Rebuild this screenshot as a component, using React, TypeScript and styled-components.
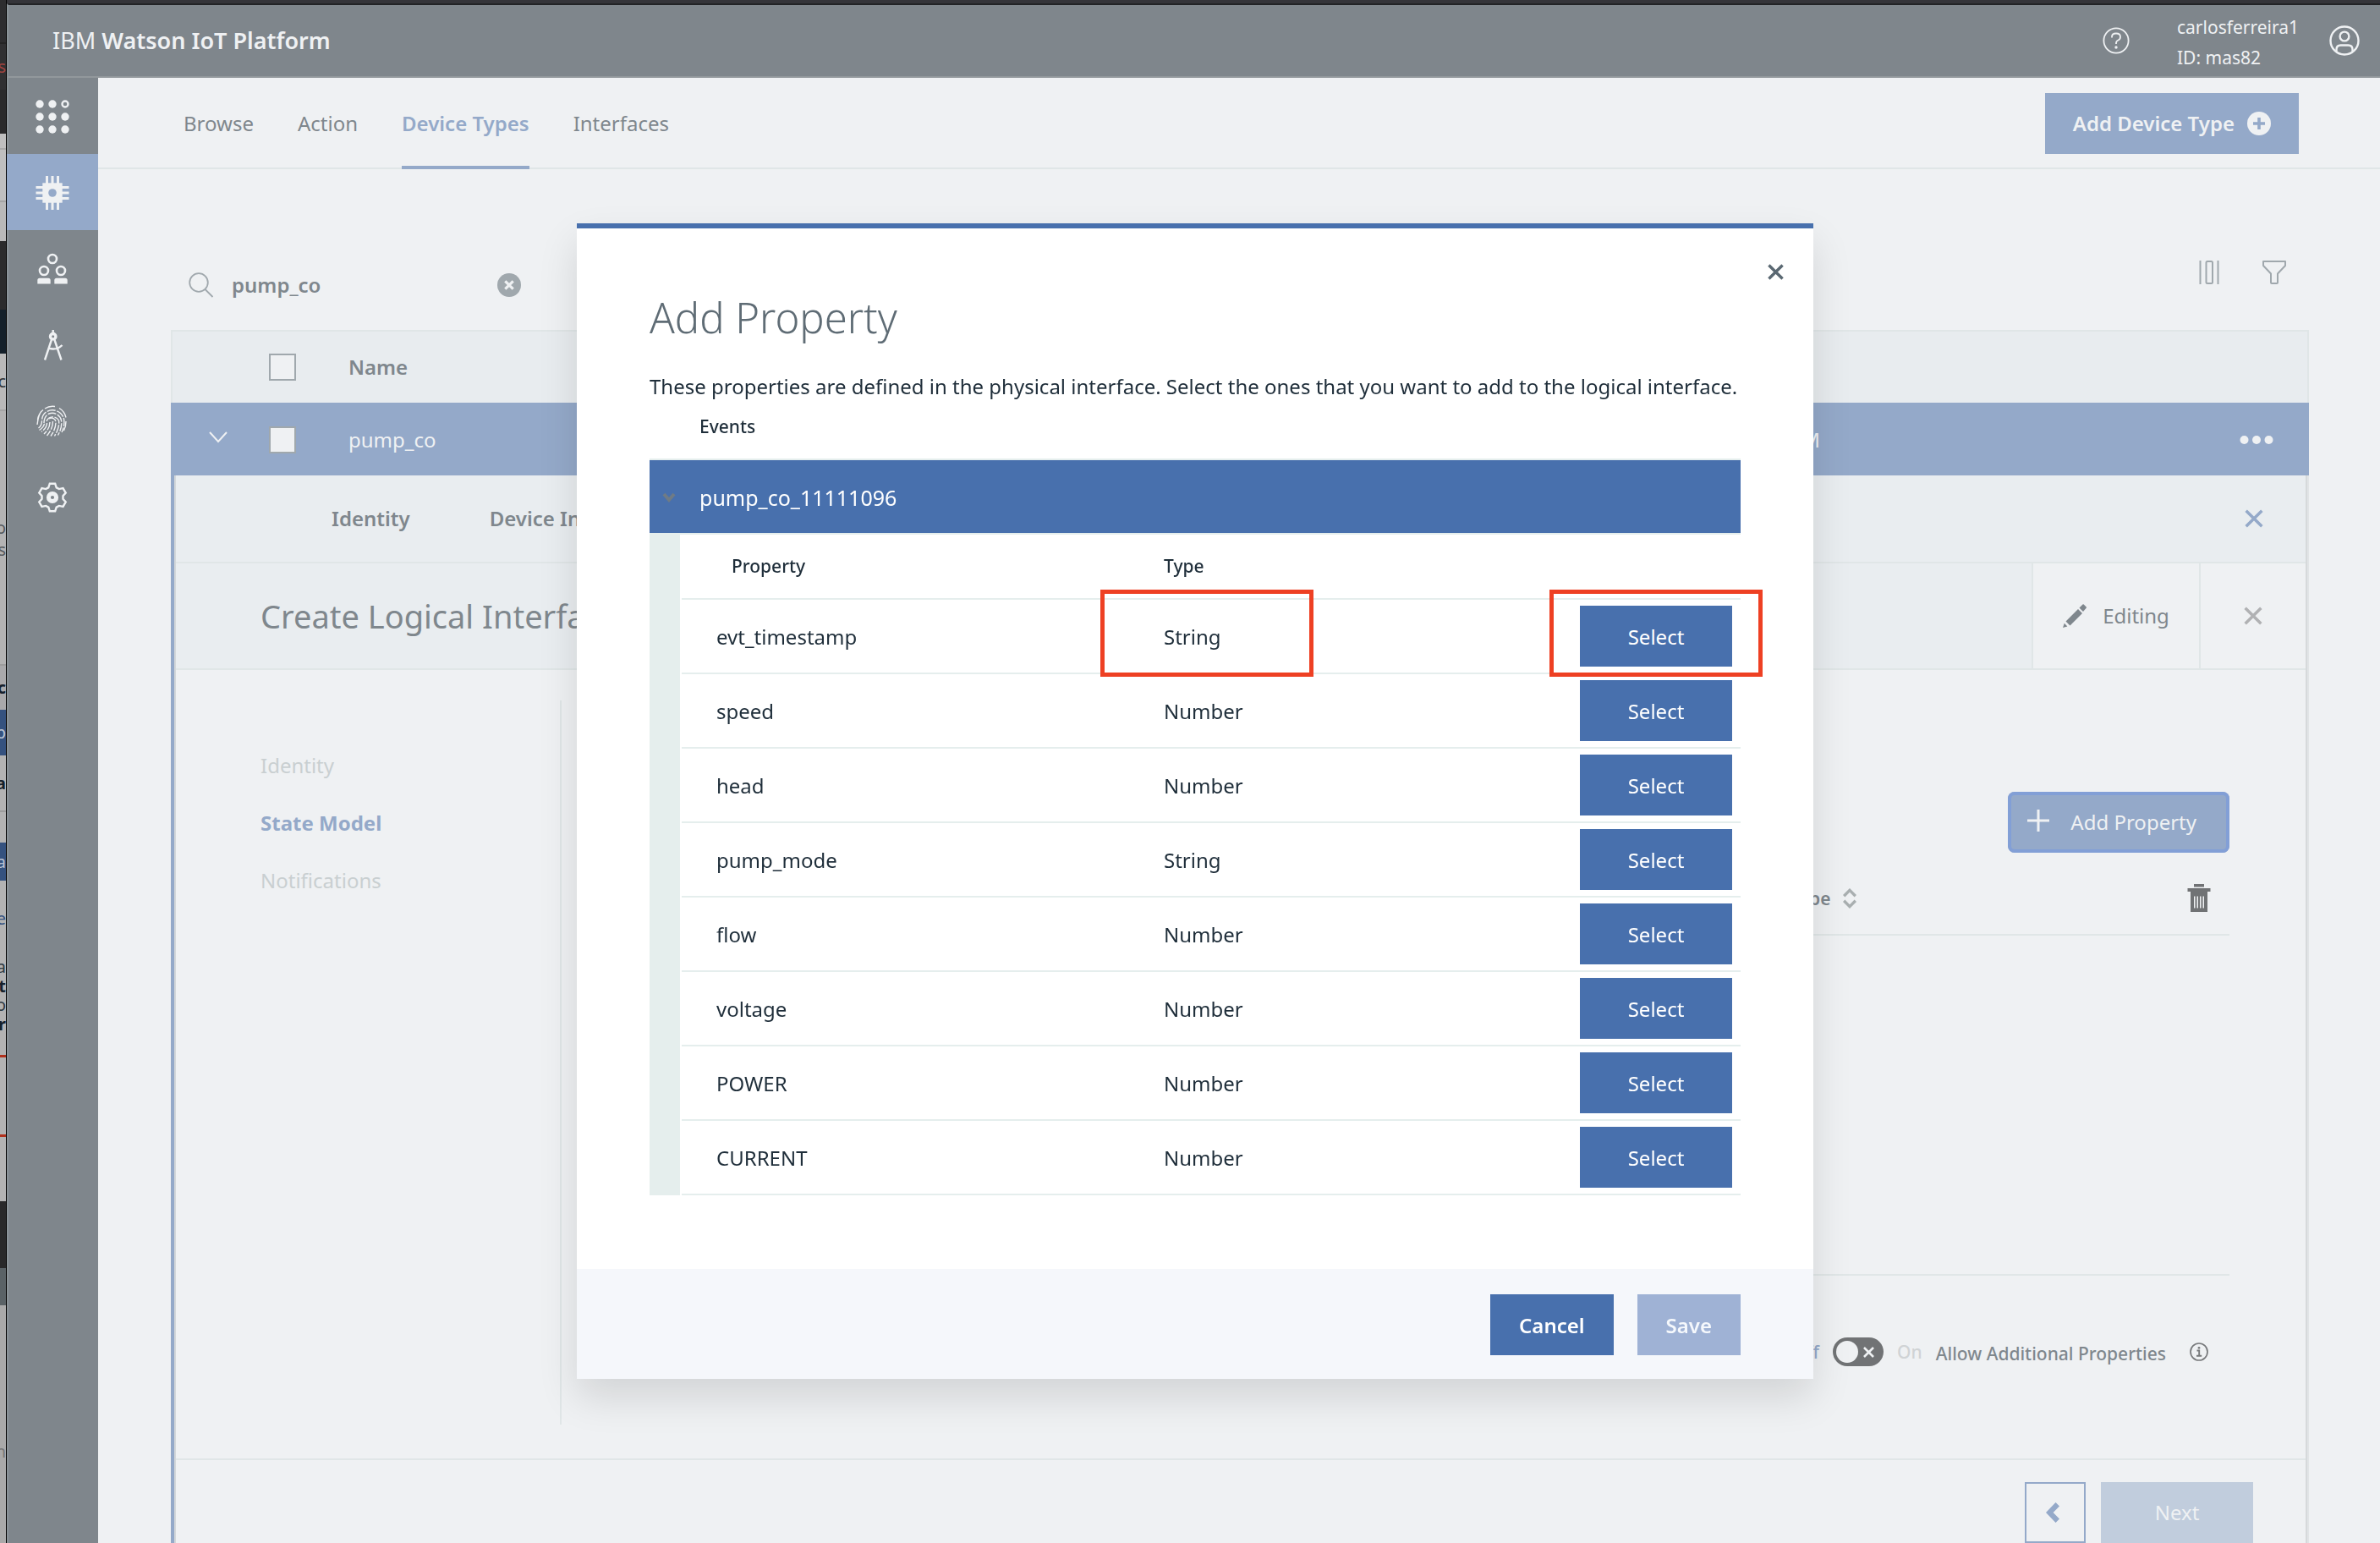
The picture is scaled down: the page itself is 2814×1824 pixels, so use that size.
import React from "react";
import styled, { createGlobalStyle, css } from "styled-components";

/* ---------- tokens ---------- */

const c = {
  page: "#eff1f3",
  chrome: "#7f868c",
  chromeEdge: "#8b9499",
  onChrome: "#eff1f3",
  fadedBlue: "#94a9c9",
  fadedText: "#7f878d",
  fadedIcon: "#a0a8ad",
  panel: "#e9edf0",
  line: "#e0e6e7",
  muted: "#c9cfd1",
  blue: "#4870ad",
  text: "#1f2e3a",
  pale: "#e5eeed",
  mark: "#ee4023",
};

const GlobalStyle = createGlobalStyle`
  *, *::before, *::after { box-sizing: border-box; }
  body { margin: 0; background: ${c.page}; }
  body, button, input, table {
    font-family: "Noto Sans", "Liberation Sans", sans-serif;
    font-size: 24px;
    line-height: 36px;
  }
  button { border: 0; padding: 0; background: none; color: inherit; cursor: pointer; }
  a { color: inherit; text-decoration: none; }
  svg { display: block; flex: none; }
`;

/* ---------- page frame ---------- */

const Page = styled.div`
  display: flex;
  min-height: 100vh;
`;

const Behind = styled.div`
  flex: none;
  width: 8px;
  border-right: 1px solid #000;
  background: #a9a9a9;
  overflow: hidden;
`;

const Slice = styled.div<{ $h: number; $bg: string; $ink?: string; $bold?: boolean }>`
  display: flex;
  align-items: center;
  justify-content: flex-end;
  height: ${(p) => p.$h}px;
  background: ${(p) => p.$bg};
  color: ${(p) => p.$ink};
  font-size: 20px;
  font-weight: ${(p) => (p.$bold ? 700 : 400)};
  line-height: 20px;
  overflow: hidden;
`;

const Window = styled.div`
  flex: 1;
  min-width: 0;
  display: flex;
  flex-direction: column;
  border-top: 4px solid #35353a;
`;

const Header = styled.header`
  display: flex;
  align-items: center;
  height: 88px;
  padding: 0 24px 0 52px;
  border-top: 2px solid #222326;
  border-bottom: 2px solid #92989c;
  border-left: 2px solid ${c.chromeEdge};
  background: ${c.chrome};
  color: ${c.onChrome};
`;

const Brand = styled.h1`
  flex: 1;
  margin: 0;
  font-size: 27px;
  font-weight: 600;
  span { font-weight: 400; }
`;

const UserInfo = styled.div`
  margin: 0 36px 0 56px;
  padding-top: 4px;
  font-size: 21px;
`;

const Columns = styled.div`
  flex: 1;
  display: flex;
`;

const Sidebar = styled.nav`
  flex: none;
  width: 108px;
  background: ${c.chrome};
  box-shadow: inset 2px 0 ${c.chromeEdge};
`;

const SideLink = styled.a<{ $active?: boolean }>`
  display: flex;
  align-items: center;
  justify-content: center;
  height: 90px;
  padding-top: 2px;
  color: ${c.onChrome};
  background: ${(p) => (p.$active ? c.fadedBlue : "transparent")};
`;

const Content = styled.div`
  flex: 1;
  min-width: 0;
  display: flex;
  flex-direction: column;
`;

const TabBar = styled.div`
  display: flex;
  align-items: center;
  height: 108px;
  padding: 0 96px 0 101px;
  box-shadow: inset 0 -2px ${c.line};
`;

const Tabs = styled.nav`
  flex: 1;
  display: flex;
  gap: 52px;
`;

const Tab = styled.a<{ $active?: boolean }>`
  display: flex;
  align-items: center;
  height: 108px;
  color: ${c.fadedText};
  ${(p) => p.$active && css`
    color: ${c.fadedBlue};
    font-weight: 600;
    box-shadow: inset 0 -4px ${c.fadedBlue};
  `}
`;

const AddDeviceButton = styled.button`
  display: flex;
  align-items: center;
  gap: 15px;
  height: 72px;
  padding: 0 33px;
  background: ${c.fadedBlue};
  color: ${c.onChrome};
  font-weight: 600;
`;

const Main = styled.main`
  flex: 1;
  display: flex;
  flex-direction: column;
  padding: 86px 84px 0 86px;
`;

/* ---------- device list ---------- */

const Toolbar = styled.div`
  display: flex;
  justify-content: space-between;
  height: 104px;
`;

const Search = styled.label`
  align-self: flex-end;
  display: flex;
  align-items: center;
  gap: 21px;
  width: 438px;
  height: 72px;
  margin-bottom: 17px;
  padding: 0 26px 0 21px;
  color: ${c.fadedIcon};
`;

const SearchInput = styled.input`
  flex: 1;
  min-width: 0;
  border: 0;
  padding: 0;
  outline: 0;
  background: none;
  color: ${c.fadedText};
  font-weight: 600;
`;

const ToolIcons = styled.div`
  display: flex;
  align-items: center;
  gap: 50px;
  height: 72px;
  padding-right: 27px;
  color: ${c.fadedIcon};
`;

const DeviceTable = styled.table`
  width: 100%;
  table-layout: fixed;
  border-collapse: separate;
  border-spacing: 0;
  text-align: left;
  th, td { height: 86px; padding: 0; }
  th {
    border-top: 2px solid ${c.line};
    background: #e8ecef;
    color: ${c.fadedText};
    font-weight: 600;
  }
  th:first-child { border-left: 2px solid ${c.line}; }
  th:last-child { border-right: 2px solid ${c.line}; }
  td { padding-top: 2px; background: ${c.fadedBlue}; color: ${c.onChrome}; }
`;

const Col = styled.col<{ $w?: number }>`
  width: ${(p) => (p.$w ? `${p.$w}px` : "auto")};
`;

const Checkbox = styled.input`
  appearance: none;
  display: block;
  width: 32px;
  height: 32px;
  margin: 0;
  border: 2px solid ${c.fadedIcon};
  background: ${c.page};
`;

const ExpandButton = styled.button`
  display: block;
  margin: 0 0 6px 45px;
`;

const EndCell = styled.td`
  text-align: right;
`;

const MoreButton = styled.button`
  display: block;
  margin: 0 42px 0 auto;
`;

/* ---------- expanded panel ---------- */

const Panel = styled.section`
  flex: 1;
  display: flex;
  flex-direction: column;
  border-left: 4px solid ${c.fadedBlue};
  border-right: 2px solid #e1e4e6;
  box-shadow: inset 2px 0 #d3d7da, inset -2px 0 #d6d9db;
  padding: 0 2px;
`;

const PanelTabs = styled.div`
  display: flex;
  align-items: center;
  height: 104px;
  padding: 0 49px 0 184px;
  border-bottom: 2px solid ${c.line};
  background: ${c.panel};
  color: ${c.fadedText};
  font-weight: 600;
`;

const PanelTab = styled.a`
  margin-right: 94px;
`;

const IconButton = styled.button<{ $ink?: string }>`
  display: flex;
  align-items: center;
  justify-content: center;
  width: 24px;
  height: 24px;
  color: ${(p) => p.$ink};
`;

const Spacer = styled.span`
  flex: 1;
`;

const TitleRow = styled.div`
  display: flex;
  align-items: stretch;
  height: 126px;
  border-bottom: 2px solid ${c.line};
  background: ${c.panel};
  color: ${c.fadedText};
`;

const PanelTitle = styled.h2`
  flex: 1;
  margin: 0;
  padding-left: 100px;
  font-size: 38px;
  font-weight: 400;
  line-height: 124px;
`;

const TitleCell = styled.div<{ $w: number }>`
  display: flex;
  align-items: center;
  justify-content: center;
  gap: 19px;
  width: ${(p) => p.$w}px;
  border-left: 2px solid ${c.line};
  background: ${c.page};
`;

const Wizard = styled.div`
  flex: 1;
  display: flex;
  padding: 36px 90px 40px 100px;
`;

const Steps = styled.nav`
  width: 356px;
  padding-top: 43px;
  border-right: 2px solid ${c.line};
`;

const Step = styled.a<{ $active?: boolean }>`
  display: block;
  line-height: 68px;
  color: ${(p) => (p.$active ? c.fadedBlue : c.muted)};
  font-weight: ${(p) => (p.$active ? 700 : 400)};
`;

const StepBody = styled.div`
  flex: 1;
  display: flex;
  flex-direction: column;
  margin-left: 64px;
  padding-top: 108px;
`;

const AddPropertyButton = styled.button`
  align-self: flex-end;
  display: flex;
  align-items: center;
  gap: 25px;
  height: 72px;
  padding: 0 39px 0 23px;
  border-radius: 8px;
  box-shadow: inset 0 0 0 4px #829fd6;
  background: ${c.fadedBlue};
  color: ${c.onChrome};
`;

const TableArea = styled.div`
  flex: 1;
  border-bottom: 2px solid ${c.line};
`;

const ModelTable = styled.table`
  width: 100%;
  table-layout: fixed;
  border-collapse: separate;
  border-spacing: 0;
  text-align: left;
  th {
    height: 98px;
    padding: 12px 0 0;
    border-bottom: 2px solid ${c.line};
    color: ${c.fadedText};
    font-size: 21px;
    font-weight: 600;
  }
`;

const SortLabel = styled.span`
  display: flex;
  align-items: center;
  gap: 15px;
`;

const TrashButton = styled.button`
  display: block;
  margin: 0 22px 2px auto;
  color: #707274;
`;

const Options = styled.div`
  display: flex;
  align-items: center;
  justify-content: flex-end;
  height: 176px;
  padding: 4px 25px 0 0;
  color: ${c.fadedText};
  font-size: 21px;
  font-weight: 500;
`;

const SwitchLabel = styled.label<{ $on?: boolean }>`
  color: ${(p) => (p.$on ? c.fadedBlue : "#d0d3d5")};
`;

const SwitchBox = styled.span`
  position: relative;
  display: flex;
  align-items: center;
  justify-content: flex-end;
  width: 60px;
  height: 34px;
  margin: 0 16px;
  padding-right: 11px;
  border-radius: 17px;
  background: #717375;
  color: ${c.page};
`;

const SwitchInput = styled.input`
  appearance: none;
  position: absolute;
  left: 4px;
  top: 4px;
  width: 26px;
  height: 26px;
  margin: 0;
  border-radius: 13px;
  background: ${c.page};
`;

const OptionText = styled.span`
  margin: 0 28px 0 16px;
  padding-top: 4px;
`;

const PanelFooter = styled.footer`
  display: flex;
  justify-content: flex-end;
  gap: 18px;
  padding: 26px 62px 0 0;
  border-top: 2px solid ${c.line};
`;

const BackButton = styled.button`
  display: flex;
  align-items: center;
  justify-content: center;
  width: 72px;
  height: 72px;
  padding-right: 6px;
  border: 2px solid ${c.fadedBlue};
  color: ${c.fadedBlue};
`;

const NextButton = styled.button`
  width: 180px;
  height: 72px;
  background: #c1cddd;
  color: ${c.onChrome};
`;

/* ---------- modal ---------- */

const Overlay = styled.div`
  position: fixed;
  inset: 0;
  display: flex;
  align-items: flex-start;
  justify-content: center;
  padding: 264px 0 0 12px;
`;

const Dialog = styled.div`
  position: relative;
  width: calc(100% - 64px);
  max-width: 1462px;
  border-top: 6px solid ${c.blue};
  background: #fff;
  color: ${c.text};
  box-shadow: 0 22px 44px rgba(0, 0, 0, 0.12);
`;

const CloseButton = styled.button`
  position: absolute;
  top: 31px;
  right: 25px;
  display: flex;
  align-items: center;
  justify-content: center;
  width: 40px;
  height: 40px;
  color: #5a6872;
`;

const DialogBody = styled.div`
  padding: 73px 86px 87px;
`;

const DialogTitle = styled.h2`
  margin: 0 0 32px;
  color: #5f6c75;
  font-size: 49px;
  font-weight: 300;
  line-height: 64px;
`;

const Intro = styled.p`
  margin: 0;
`;

const GroupLabel = styled.h3`
  margin: 0 0 9px;
  padding-left: 59px;
  font-size: 21px;
  font-weight: 500;
  line-height: 58px;
`;

const GroupButton = styled.button`
  display: flex;
  align-items: center;
  gap: 28px;
  width: 100%;
  height: 88px;
  padding: 2px 0 0 15px;
  border-top: 2px solid ${c.pale};
  background: ${c.blue};
  color: #fff;
  font-size: 25px;
`;

const GroupBody = styled.div`
  padding-left: 2px;
  border-top: 2px solid ${c.pale};
  border-left: 36px solid ${c.pale};
`;

const PropertyTable = styled.table`
  width: 100%;
  table-layout: fixed;
  border-collapse: separate;
  border-spacing: 0;
  text-align: left;
`;

const HeadCell = styled.th<{ $indent?: number }>`
  height: 77px;
  padding: 0 0 2px ${(p) => p.$indent ?? 41}px;
  border-bottom: 2px solid ${c.pale};
  font-size: 21px;
  font-weight: 500;
`;

const Cell = styled.td`
  position: relative;
  height: 88px;
  padding: 2px 0 0 41px;
  border-bottom: 2px solid ${c.pale};
`;

const ActionCell = styled(Cell)`
  padding: 7px 10px;
`;

const SelectButton = styled.button`
  display: block;
  width: 180px;
  height: 72px;
  padding-top: 2px;
  background: ${c.blue};
  color: #fff;
`;

const Highlight = styled.span`
  position: absolute;
  top: -12px;
  left: -34px;
  width: 252px;
  height: 103px;
  border: 5px solid ${c.mark};
  pointer-events: none;
  ${ActionCell} & { left: -26px; }
`;

const DialogFooter = styled.footer`
  display: flex;
  justify-content: flex-end;
  gap: 28px;
  padding: 30px 86px 28px;
  background: #f5f7fb;
`;

const DialogButton = styled.button<{ $muted?: boolean }>`
  height: 72px;
  padding: 2px 34px 0;
  background: ${(p) => (p.$muted ? "#9fb2d5" : c.blue)};
  color: ${(p) => (p.$muted ? "#f5f8fc" : "#fff")};
  font-weight: 600;
`;

/* ---------- icons ---------- */

const AppsIcon = () => (
  <svg width="40" height="40" viewBox="0 0 40 40" fill="currentColor">
    {[5, 20, 35].map((y) =>
      [5, 20, 35].map((x) =>
        x === 35 && y === 5 ? (
          <circle key={`${x}-${y}`} cx={x} cy={y} r="3.5" fill="none" stroke="currentColor" strokeWidth="2.4" />
        ) : (
          <circle key={`${x}-${y}`} cx={x} cy={y} r="4.7" />
        )
      )
    )}
  </svg>
);

const ChipIcon = () => (
  <svg width="40" height="40" viewBox="0 0 40 40" stroke="currentColor" strokeWidth="3" fill="none">
    <path d="M13.5 0v40M20 0v40M26.5 0v40M.5 13.5h39M.5 20h39M.5 26.5h39" />
    <rect x="8.3" y="8.3" width="23.4" height="23.4" fill="currentColor" stroke="none" />
    <circle cx="20" cy="20" r="4.8" fill={c.fadedBlue} stroke="none" />
  </svg>
);

const PeopleIcon = () => (
  <svg width="40" height="40" viewBox="0 0 40 40" stroke="currentColor" strokeWidth="2.6" fill="none">
    <circle cx="20" cy="8" r="5" />
    <circle cx="10" cy="22" r="5" />
    <circle cx="30" cy="22" r="5" />
    <path d="M2.3 37.5v-4.2q0-2.6 2.6-2.6h10.2q2.6 0 2.6 2.6v4.2zM22.3 37.5v-4.2q0-2.6 2.6-2.6h10.2q2.6 0 2.6 2.6v4.2z" fill="currentColor" stroke="none" />
  </svg>
);

const CompassIcon = () => (
  <svg width="40" height="40" viewBox="0 0 40 40" stroke="currentColor" strokeWidth="2.4" fill="none">
    <circle cx="20.7" cy="9.7" r="3.2" strokeWidth="3.4" />
    <path d="M20.7 2v4M19 13.500L11 37.500M22.400 13.500L30.500 37.500M15.500 23.700Q25 26.500 31.500 20" />
  </svg>
);

const FingerprintIcon = () => (
  <svg width="40" height="40" viewBox="0 0 40 40" stroke="currentColor" strokeWidth="1.4" fill="none">
    <g strokeDasharray="10 1.600">
      <path d="M16 17a5 5 0 0 1 8 4c0 7-3 12-6 16.500" />
      <path d="M13 20a8 8 0 0 1 14.500-1c1 7-2 13-5 18.500" />
      <path d="M20.500 20c0 7-3 12-7 17" />
      <path d="M17 21c0 6-3 10-7 14" />
      <path d="M13.500 22c0 4-3 8-6.500 10.500" />
      <path d="M10 22c0-5 2-9 6-11a11 11 0 0 1 14.500 8c1 7-1 12-4 17.500" />
      <path d="M3.500 28c3-2 4-5 4-9a13 13 0 0 1 5-10a14 14 0 0 1 21 8c1 6 0 11-2.500 16" />
      <path d="M4.500 30.500c3-2 6-5 6-8.500" />
    </g>
    <path d="M2 24c1-6 1-11 5-16M11 5a17 17 0 0 1 12-2.500M28 4.500a17 17 0 0 1 8 11M36 20c0 4-.5 7-2.500 11M9 6.500c-4 3-6 7-6.500 12" />
  </svg>
);

const gearPath = Array.from({ length: 6 }, (_, i) => {
  const at = (r: number, deg: number) => {
    const a = ((i * 60 - 90 + deg) * Math.PI) / 180;
    return `${(20 + r * Math.cos(a)).toFixed(2)} ${(20 + r * Math.sin(a)).toFixed(2)}`;
  };
  return `${i ? "L" : "M"}${at(12.6, -22)}L${at(16.6, -11)}L${at(16.6, 11)}L${at(12.6, 22)}`;
}).join("") + "Z";

const GearIcon = () => (
  <svg width="40" height="40" viewBox="0 0 40 40" stroke="currentColor" fill="none">
    <path d={gearPath} strokeWidth="2.4" />
    <circle cx="20" cy="20" r="4.600" strokeWidth="5" />
  </svg>
);

const HelpIcon = () => (
  <svg width="32" height="32" viewBox="0 0 32 32" stroke="currentColor" strokeWidth="1.8" fill="none">
    <circle cx="16" cy="16" r="14.600" />
    <path d="M11 12.500v-1q0-4 5-4t5 4q0 3-2.500 4t-2.500 3.500v1" />
    <circle cx="16" cy="24" r="1.700" fill="currentColor" stroke="none" />
  </svg>
);

const UserIcon = () => (
  <svg width="36" height="36" viewBox="0 0 36 36" stroke="currentColor" strokeWidth="2.400" fill="none">
    <circle cx="18" cy="18" r="16.500" />
    <circle cx="18" cy="13" r="5.400" />
    <path d="M8.500 31v-2.500q0-5 5-5h9q5 0 5 5v2.500" />
  </svg>
);

const PlusCircleIcon = () => (
  <svg width="28" height="28" viewBox="0 0 28 28">
    <circle cx="14" cy="14" r="14" fill="currentColor" />
    <path d="M14 7v14M7 14h14" stroke={c.fadedBlue} strokeWidth="3.600" />
  </svg>
);

const SearchIcon = () => (
  <svg width="30" height="30" viewBox="0 0 30 30" stroke="currentColor" strokeWidth="1.800" fill="none">
    <circle cx="12" cy="12" r="10.800" />
    <path d="M19.500 20l9 9" />
  </svg>
);

const ClearIcon = () => (
  <svg width="28" height="28" viewBox="0 0 28 28">
    <circle cx="14" cy="14" r="14" fill="currentColor" />
    <path d="M9.300 9.300l9.400 9.400M18.700 9.300l-9.400 9.400" stroke={c.page} strokeWidth="3.200" />
  </svg>
);

const ColumnsIcon = () => (
  <svg width="26" height="28" viewBox="0 0 26 28" stroke="currentColor" strokeWidth="2" fill="none">
    <path d="M2.500 0v28M23.500 0v28" />
    <rect x="9.500" y="1" width="7.500" height="26" rx="1.500" />
  </svg>
);

const FilterIcon = () => (
  <svg width="28" height="28" viewBox="0 0 28 28" stroke="currentColor" strokeWidth="2" fill="none" strokeLinejoin="round">
    <path d="M1 1h26v5l-9 9.500V26q0 1-1 1h-6q-1 0-1-1V15.500L1 6z" />
  </svg>
);

const ChevronIcon = ({ w, h, stroke, ink = "currentColor" }: { w: number; h: number; stroke: number; ink?: string }) => (
  <svg width={w} height={h} viewBox={`0 0 ${w} ${h}`} fill="none" stroke={ink} strokeWidth={stroke}>
    <path d={`M${stroke / 2} ${stroke / 2}L${w / 2} ${h - stroke}L${w - stroke / 2} ${stroke / 2}`} />
  </svg>
);

const DotsIcon = () => (
  <svg width="40" height="12" viewBox="0 0 40 12" fill="currentColor">
    <circle cx="5.500" cy="6" r="5" />
    <circle cx="20" cy="6" r="5" />
    <circle cx="34.500" cy="6" r="5" />
  </svg>
);

const CrossIcon = ({ size, stroke }: { size: number; stroke: number }) => (
  <svg width={size} height={size} viewBox="0 0 20 20" stroke="currentColor" strokeWidth={stroke}>
    <path d="M1.500 1.500l17 17M18.500 1.500l-17 17" />
  </svg>
);

const PencilIcon = () => (
  <svg width="28" height="28" viewBox="0 0 28 28" fill="currentColor">
    <path d="M0 28l1.800-5.200 3.600 3.600zM3.500 20.500L18 6l5 5L8.500 25.500zM19.500 4.500L23.500.5q.6-.6 1.200 0l3 3q.6.600 0 1.200l-3.700 4.300z" />
  </svg>
);

const PlusIcon = () => (
  <svg width="26" height="30" viewBox="0 0 26 30" stroke="currentColor" strokeWidth="3" fill="none">
    <path d="M13 0v26M0 13h26" />
  </svg>
);

const SortIcon = () => (
  <svg width="16" height="24" viewBox="0 0 16 24" stroke="#a9afb0" strokeWidth="3.400" fill="none">
    <path d="M1.200 9.200L8 2.400l6.800 6.800M1.200 14.800L8 21.600l6.800-6.800" />
  </svg>
);

const TrashIcon = () => (
  <svg width="28" height="33" viewBox="0 0 28 33" fill="currentColor">
    <path d="M8 0h12v3.500H8zM.5 5h27v4H.5z" />
    <path fillRule="evenodd" d="M4 8.500h20V33H4zM8 14.500v14h1.500v-14zM11.500 14.500v14h1.500v-14zM15 14.500v14h1.500v-14zM18.500 14.500v14H20v-14z" />
  </svg>
);

const InfoIcon = () => (
  <svg width="22" height="22" viewBox="0 0 22 22" stroke="#77797b" fill="none">
    <circle cx="11" cy="11" r="10" strokeWidth="1.700" />
    <path d="M8.500 9.500h2.700v6M8 15.800h6.200" strokeWidth="1.900" />
    <circle cx="11" cy="6.300" r="1.400" fill="#77797b" stroke="none" />
  </svg>
);

const BackIcon = () => (
  <svg width="16" height="24" viewBox="0 0 16 24" fill="currentColor">
    <path d="M11.500 0L16 4.500 8.600 12 16 19.500 11.500 24 0 12z" />
  </svg>
);

/* ---------- data ---------- */

type SliceData = [number, string, string?, string?, boolean?];

const slices: SliceData[] = [
  [50, "#2d2d2f"], [2, "#242424"], [54, "#303032", "s", "#a04440"], [52, "#2a2a2b"],
  [17, "#bfbfbf"], [2, "#a8a8a8"], [60, "#bfbfbf"], [2, "#a4a4a4"], [46, "#b9b9b9"],
  [81, "#2b2b2c"], [52, "#14202a"], [66, "#b9b9b9", "c", "#303438"], [2, "#a4a4a4"],
  [124, "#b3b3b3"], [28, "#b3b3b3", "o", "#55595c"], [24, "#b3b3b3", "s", "#55595c"], [123, "#b3b3b3"],
  [2, "#9c9c9c"], [52, "#a9a9ab", "c", "#15202b", true], [54, "#35527f", "p", "#b9c3d3"],
  [65, "#b3b3b3", "a", "#15202b", true], [2, "#9c9c9c"], [36, "#b3b3b3"], [45, "#35527f", "a", "#b9c3d3"],
  [90, "#b3b3b3", "e", "#35527f"], [24, "#b3b3b3", "a", "#303a42"], [22, "#b3b3b3", "t", "#15202b", true],
  [22, "#b3b3b3", "o", "#303a42"], [24, "#b3b3b3", "r", "#15202b", true], [24, "#b3b3b3"],
  [3, "#b0301c"], [91, "#b3b3b3"], [3, "#b0301c"], [76, "#b3b3b3"], [79, "#29292a"], [44, "#5a6266"],
  [160, "#a9a9a9"], [26, "#a9a9a9", "h", "#777777"],
];

const properties = [
  { name: "evt_timestamp", type: "String", marked: true },
  { name: "speed", type: "Number" },
  { name: "head", type: "Number" },
  { name: "pump_mode", type: "String" },
  { name: "flow", type: "Number" },
  { name: "voltage", type: "Number" },
  { name: "POWER", type: "Number" },
  { name: "CURRENT", type: "Number" },
];

const sideLinks = [
  { label: "Apps", icon: <AppsIcon /> },
  { label: "Devices", icon: <ChipIcon />, active: true },
  { label: "Members", icon: <PeopleIcon /> },
  { label: "Design", icon: <CompassIcon /> },
  { label: "Security", icon: <FingerprintIcon /> },
  { label: "Settings", icon: <GearIcon /> },
];

/* ---------- sections ---------- */

const BehindStrip = () => (
  <Behind aria-hidden="true">
    {slices.map(([h, bg, text, ink, bold], i) => (
      <Slice key={i} $h={h} $bg={bg} $ink={ink} $bold={bold}>{text}</Slice>
    ))}
  </Behind>
);

const DeviceList = () => (
  <>
    <Toolbar>
      <Search>
        <SearchIcon />
        <SearchInput type="text" aria-label="Search" defaultValue="pump_co" />
        <IconButton type="button" aria-label="Clear search"><ClearIcon /></IconButton>
      </Search>
      <ToolIcons>
        <button type="button" aria-label="Columns"><ColumnsIcon /></button>
        <button type="button" aria-label="Filter"><FilterIcon /></button>
      </ToolIcons>
    </Toolbar>
    <DeviceTable>
      <colgroup>
        <Col $w={116} /><Col $w={94} /><Col /><Col $w={400} /><Col $w={578} />
      </colgroup>
      <thead>
        <tr>
          <th />
          <th><Checkbox type="checkbox" aria-label="Select all" /></th>
          <th>Name</th>
          <th />
          <th />
        </tr>
      </thead>
      <tbody>
        <tr>
          <td><ExpandButton type="button" aria-label="Collapse"><ChevronIcon w={22} h={14} stroke={2} /></ExpandButton></td>
          <td><Checkbox type="checkbox" aria-label="Select pump_co" /></td>
          <td>pump_co</td>
          <EndCell>PM</EndCell>
          <td><MoreButton type="button" aria-label="More actions"><DotsIcon /></MoreButton></td>
        </tr>
      </tbody>
    </DeviceTable>
  </>
);

const LogicalInterfacePanel = () => (
  <Panel>
    <PanelTabs>
      <PanelTab href="#identity">Identity</PanelTab>
      <PanelTab href="#device">Device Info</PanelTab>
      <Spacer />
      <IconButton type="button" aria-label="Close details" $ink={c.fadedBlue}><CrossIcon size={22} stroke={3.2} /></IconButton>
    </PanelTabs>
    <TitleRow>
      <PanelTitle>Create Logical Interface</PanelTitle>
      <TitleCell $w={198}><PencilIcon />Editing</TitleCell>
      <TitleCell $w={126}>
        <IconButton type="button" aria-label="Close editor" $ink="#b0b1b3"><CrossIcon size={22} stroke={3.2} /></IconButton>
      </TitleCell>
    </TitleRow>
    <Wizard>
      <Steps>
        <Step href="#step-identity">Identity</Step>
        <Step href="#step-model" $active>State Model</Step>
        <Step href="#step-notifications">Notifications</Step>
      </Steps>
      <StepBody>
        <AddPropertyButton type="button"><PlusIcon />Add Property</AddPropertyButton>
        <TableArea>
          <ModelTable>
            <colgroup><Col /><Col $w={420} /><Col $w={100} /></colgroup>
            <thead>
              <tr>
                <th />
                <th><SortLabel>Type <SortIcon /></SortLabel></th>
                <th><TrashButton type="button" aria-label="Delete"><TrashIcon /></TrashButton></th>
              </tr>
            </thead>
          </ModelTable>
        </TableArea>
        <Options>
          <SwitchLabel htmlFor="additional" $on>Off</SwitchLabel>
          <SwitchBox>
            <SwitchInput id="additional" type="checkbox" />
            <CrossIcon size={13} stroke={4} />
          </SwitchBox>
          <SwitchLabel htmlFor="additional">On</SwitchLabel>
          <OptionText>Allow Additional Properties</OptionText>
          <InfoIcon />
        </Options>
      </StepBody>
    </Wizard>
    <PanelFooter>
      <BackButton type="button" aria-label="Back"><BackIcon /></BackButton>
      <NextButton type="button">Next</NextButton>
    </PanelFooter>
  </Panel>
);

const AddPropertyDialog = () => (
  <Overlay>
    <Dialog role="dialog" aria-labelledby="dialog-title">
      <CloseButton type="button" aria-label="Close"><CrossIcon size={19} stroke={3.6} /></CloseButton>
      <DialogBody>
        <DialogTitle id="dialog-title">Add Property</DialogTitle>
        <Intro>
          These properties are defined in the physical interface. Select the ones that you want to add to the logical interface.
        </Intro>
        <GroupLabel>Events</GroupLabel>
        <GroupButton type="button">
          <ChevronIcon w={16} h={13} stroke={4} ink="#6f7b85" />
          pump_co_11111096
        </GroupButton>
        <GroupBody>
          <PropertyTable>
            <colgroup><Col $w={529} /><Col /><Col $w={200} /></colgroup>
            <thead>
              <tr>
                <HeadCell $indent={59}>Property</HeadCell>
                <HeadCell>Type</HeadCell>
                <HeadCell />
              </tr>
            </thead>
            <tbody>
              {properties.map((p) => (
                <tr key={p.name}>
                  <Cell>{p.name}</Cell>
                  <Cell>{p.type}{p.marked && <Highlight />}</Cell>
                  <ActionCell>
                    <SelectButton type="button">Select</SelectButton>
                    {p.marked && <Highlight />}
                  </ActionCell>
                </tr>
              ))}
            </tbody>
          </PropertyTable>
        </GroupBody>
      </DialogBody>
      <DialogFooter>
        <DialogButton type="button">Cancel</DialogButton>
        <DialogButton type="button" $muted>Save</DialogButton>
      </DialogFooter>
    </Dialog>
  </Overlay>
);

export default function App() {
  return (
    <>
      <GlobalStyle />
      <Page>
        <BehindStrip />
        <Window>
          <Header>
            <Brand><span>IBM</span> Watson IoT Platform</Brand>
            <button type="button" aria-label="Help"><HelpIcon /></button>
            <UserInfo>
              <div>carlosferreira1</div>
              <div>ID: mas82</div>
            </UserInfo>
            <button type="button" aria-label="Account"><UserIcon /></button>
          </Header>
          <Columns>
            <Sidebar>
              {sideLinks.map((l) => (
                <SideLink key={l.label} href={`#${l.label}`} aria-label={l.label} $active={l.active}>{l.icon}</SideLink>
              ))}
            </Sidebar>
            <Content>
              <TabBar>
                <Tabs>
                  <Tab href="#browse">Browse</Tab>
                  <Tab href="#action">Action</Tab>
                  <Tab href="#types" $active>Device Types</Tab>
                  <Tab href="#interfaces">Interfaces</Tab>
                </Tabs>
                <AddDeviceButton type="button">Add Device Type<PlusCircleIcon /></AddDeviceButton>
              </TabBar>
              <Main>
                <DeviceList />
                <LogicalInterfacePanel />
              </Main>
            </Content>
          </Columns>
        </Window>
      </Page>
      <AddPropertyDialog />
    </>
  );
}
